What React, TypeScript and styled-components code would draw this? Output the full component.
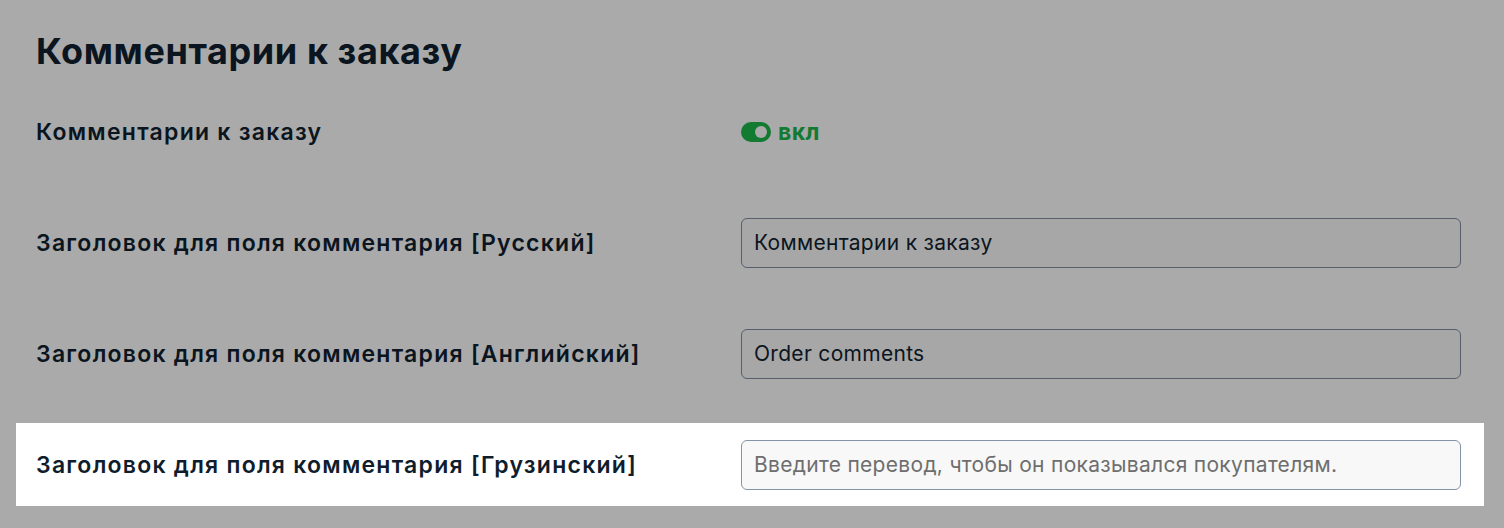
import styled, { createGlobalStyle } from "styled-components";

const GlobalStyle = createGlobalStyle`
  html, body {
    margin: 0;
    padding: 0;
    background: #aaaaaa;
  }
  body {
    font-family: Inter, "Noto Sans", sans-serif;
  }
`;

const rows = [
  { label: "Заголовок для поля комментария [Русский]", value: "Комментарии к заказу" },
  { label: "Заголовок для поля комментария [Английский]", value: "Order comments" },
  {
    label: "Заголовок для поля комментария [Грузинский]",
    value: "",
    placeholder: "Введите перевод, чтобы он показывался покупателям.",
    highlighted: true,
  },
];

const App = () => {
  return (
    <>
      <GlobalStyle />
      <Page>
        <Title>Комментарии к заказу</Title>
        <Rows>
          <Row>
            <Label>Комментарии к заказу</Label>
            <Switch>
              <Track>
                <Knob />
              </Track>
              <SwitchText>вкл</SwitchText>
            </Switch>
          </Row>
          {rows.map((r) => (
            <Row key={r.label} $highlighted={r.highlighted}>
              <Label $highlighted={r.highlighted}>{r.label}</Label>
              <Input
                $highlighted={r.highlighted}
                defaultValue={r.value}
                placeholder={r.placeholder}
              />
            </Row>
          ))}
        </Rows>
      </Page>
    </>
  );
};

const Page = styled.div`
  height: 528px;
  padding: 28px 20px 0 16px;
  box-sizing: border-box;
  overflow: hidden;
`;

const Title = styled.h1`
  margin: 0 0 0 20px;
  font-size: 36px;
  line-height: 46px;
  font-weight: 700;
  letter-spacing: 0.6px;
  color: #0b1520;
`;

const Rows = styled.div`
  display: flex;
  flex-direction: column;
  gap: 28px;
  margin-top: 16px;
`;

const Row = styled.div<{ $highlighted?: boolean }>`
  display: grid;
  grid-template-columns: 1fr 720px;
  align-items: center;
  height: 83px;
  padding: 0 23px 0 20px;
  background: ${(p) => (p.$highlighted ? "#ffffff" : "transparent")};
`;

const Label = styled.div<{ $highlighted?: boolean }>`
  font-size: 23px;
  font-weight: 600;
  letter-spacing: 1.25px;
  color: ${(p) => (p.$highlighted ? "#101d2c" : "#0b1520")};
`;

const Switch = styled.div`
  display: flex;
  align-items: center;
  gap: 7px;
`;

const Track = styled.div`
  width: 30px;
  height: 20px;
  border-radius: 10px;
  background: #137a31;
  display: flex;
  align-items: center;
  justify-content: flex-end;
  padding: 0 4px;
  box-sizing: border-box;
`;

const Knob = styled.div`
  width: 12px;
  height: 12px;
  border-radius: 50%;
  background: #aaaaaa;
`;

const SwitchText = styled.span`
  font-size: 23px;
  font-weight: 700;
  letter-spacing: 0.4px;
  color: #137a31;
`;

const Input = styled.input<{ $highlighted?: boolean }>`
  width: 720px;
  height: 50px;
  box-sizing: border-box;
  padding: 0 12px;
  border-radius: 6px;
  border: 1px solid ${(p) => (p.$highlighted ? "#8494a7" : "#56606c")};
  background: ${(p) => (p.$highlighted ? "#f8f8f8" : "#a7a7a7")};
  color: #0b1520;
  font-family: Inter, "Noto Sans", sans-serif;
  font-size: 21px;
  letter-spacing: 0.3px;
  outline: none;
  &::placeholder {
    color: #6e6e6e;
  }
`;

export default App;
